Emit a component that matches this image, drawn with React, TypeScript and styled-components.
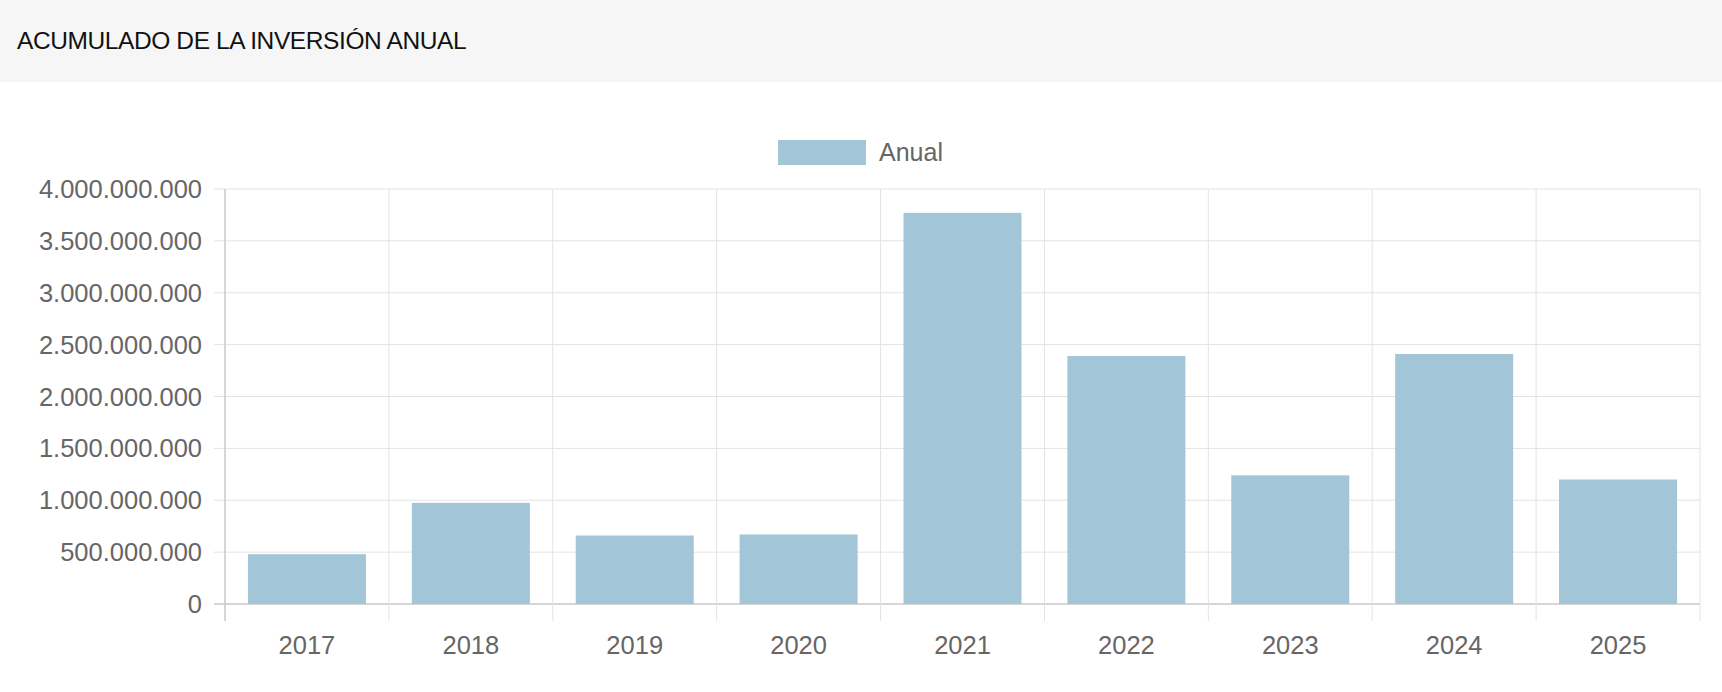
import React from "react";
import styled, { createGlobalStyle } from "styled-components";

const Global = createGlobalStyle`
  html, body { margin: 0; padding: 0; background: #fff; }
  body { font-family: "Liberation Sans", Arial, sans-serif; }
`;

const Page = styled.div`
  width: 1722px;
  height: 692px;
  display: flex;
  flex-direction: column;
  overflow: hidden;
`;

const Header = styled.div`
  height: 82px;
  background: #f6f6f6;
  display: flex;
  align-items: center;
  padding: 0 17px;
  font-size: 24.5px;
  color: #111;
  letter-spacing: -0.4px;
`;

const ChartBox = styled.div`
  flex: 1;
`;

const years = ["2017", "2018", "2019", "2020", "2021", "2022", "2023", "2024", "2025"];
const values = [480, 975, 660, 670, 3770, 2390, 1240, 2410, 1200];
const ticks = [0, 500, 1000, 1500, 2000, 2500, 3000, 3500, 4000];

const X0 = 225;
const X1 = 1700;
const TOP = 107;
const BASE = 522;
const CAT = (X1 - X0) / 9;
const BARW = 118;
const fmt = (v: number) =>
  v === 0 ? "0" : (v * 1000000).toString().replace(/\B(?=(\d{3})+(?!\d))/g, ".");
const yOf = (v: number) => BASE - (v / 4000) * (BASE - TOP);

export default function App() {
  return (
    <Page>
      <Global />
      <Header>ACUMULADO DE LA INVERSIÓN ANUAL</Header>
      <ChartBox>
        <svg width="1722" height="610" style={{ display: "block" }} fontFamily="Liberation Sans, Arial, sans-serif">
          <rect x="778" y="58" width="88" height="25" fill="#a2c5d8" />
          <text x="879" y="79" fontSize="25" fill="#666">Anual</text>
          {ticks.map((t) => (
            <g key={t}>
              <line x1={214} x2={X1} y1={yOf(t)} y2={yOf(t)} stroke={t === 0 ? "#c8c8c8" : "#e3e3e3"} strokeWidth={t === 0 ? 1.5 : 1} />
              <text x={202} y={yOf(t) + 9} fontSize="25.5" fill="#666" textAnchor="end">{fmt(t)}</text>
            </g>
          ))}
          {Array.from({ length: 10 }).map((_, i) => (
            <line key={i} x1={X0 + i * CAT} x2={X0 + i * CAT} y1={TOP} y2={BASE + 17} stroke={i === 0 ? "#c8c8c8" : "#e3e3e3"} strokeWidth={i === 0 ? 1.5 : 1} />
          ))}
          {values.map((v, i) => (
            <rect key={i} x={X0 + i * CAT + (CAT - BARW) / 2} y={yOf(v)} width={BARW} height={BASE - yOf(v)} fill="#a2c5d8" />
          ))}
          {years.map((y, i) => (
            <text key={y} x={X0 + i * CAT + CAT / 2} y={572} fontSize="25.5" fill="#666" textAnchor="middle">{y}</text>
          ))}
        </svg>
      </ChartBox>
    </Page>
  );
}
